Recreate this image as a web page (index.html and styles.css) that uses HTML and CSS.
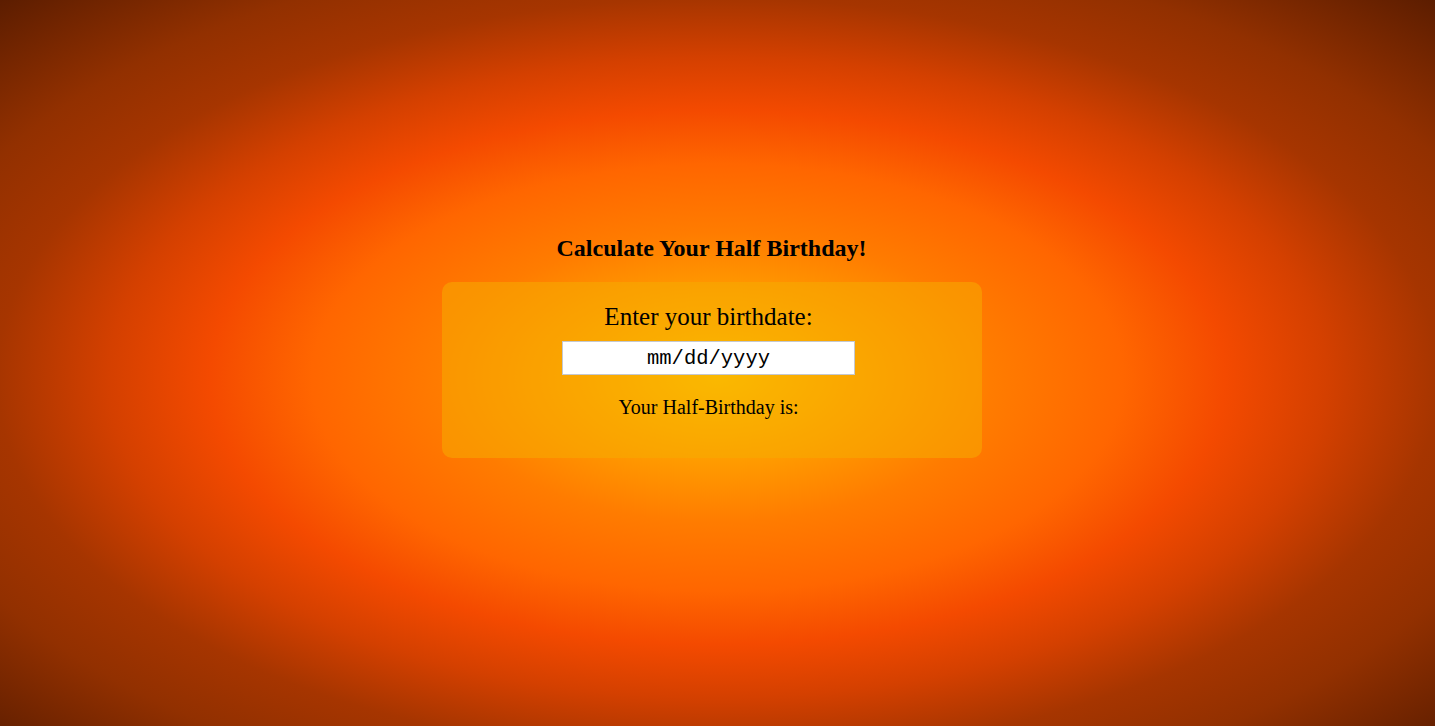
FILE: index.html
```html
<!DOCTYPE html>
<html lang="en">
<head>
<meta charset="utf-8">
<title>Half Birthday Calculator</title>
<link rel="stylesheet" href="styles.css">
</head>
<body>
  <main class="page">
    <h2 class="title">Calculate Your Half Birthday!</h2>
    <section class="card">
      <label class="label" for="birthdate">Enter your birthdate:</label>
      <input class="date-input" id="birthdate" type="text" value="mm/dd/yyyy">
      <p class="result">Your Half-Birthday is:</p>
    </section>
  </main>
</body>
</html>
```

FILE: styles.css
```css
html, body {
  margin: 0;
  padding: 0;
  height: 100%;
}

body {
  font-family: "Liberation Serif", "Times New Roman", serif;
  color: #000;
  background: radial-gradient(ellipse farthest-corner at 50% 52%,
    #ffc800 0%,
    #ffa000 14%,
    #ff7c00 27%,
    #ff6600 40%,
    #f44a00 50%,
    #d44000 60%,
    #a63500 71%,
    #923000 82%,
    #5c1d00 100%);
  min-height: 100vh;
}

.page {
  min-height: 100vh;
  box-sizing: border-box;
  display: flex;
  flex-direction: column;
  align-items: center;
  justify-content: center;
  padding-bottom: 34px;
  padding-right: 12px;
}

.title {
  margin: 0 0 20px;
  font-size: 24px;
  line-height: 28px;
  font-weight: bold;
}

.card {
  width: 540px;
  height: 176px;
  box-sizing: border-box;
  padding: 21px 6px 0 0;
  border-radius: 10px;
  background: rgba(245, 172, 0, 0.55);
  display: flex;
  flex-direction: column;
  align-items: center;
}

.label {
  font-size: 25px;
  line-height: 28px;
}

.date-input {
  margin-top: 10px;
  width: 293px;
  height: 34px;
  box-sizing: border-box;
  border: 1px solid #c4c8d0;
  background: #fff;
  padding: 0;
  font-family: "Liberation Mono", "Courier New", monospace;
  font-size: 20.5px;
  text-align: center;
  color: #000;
  outline: none;
}

.result {
  margin: 21px 0 0;
  font-size: 20px;
  line-height: 23px;
}
```
